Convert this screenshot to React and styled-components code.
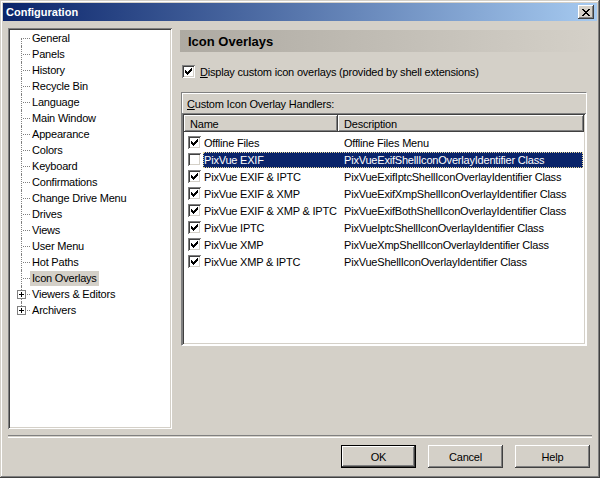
import styled, { createGlobalStyle } from 'styled-components';

const GlobalStyle = createGlobalStyle`
  html, body {
    margin: 0;
    padding: 0;
    background: #d4d0c8;
  }
  body {
    font-family: "Liberation Sans", Arial, sans-serif;
    font-size: 11px;
    letter-spacing: -0.2px;
    color: #000;
  }
`;

const Window = styled.div`
  box-sizing: border-box;
  width: 600px;
  height: 478px;
  padding: 3px;
  display: flex;
  flex-direction: column;
  background: #d4d0c8;
  box-shadow: inset -1px -1px #404040, inset 1px 1px #d4d0c8,
    inset -2px -2px #808080, inset 2px 2px #fff;
`;

const TitleBar = styled.div`
  height: 18px;
  flex-shrink: 0;
  display: flex;
  align-items: center;
  justify-content: space-between;
  padding: 0 3px 0 3px;
  background: linear-gradient(to right, #0a246a, #a6caf0);
`;

const TitleText = styled.span`
  color: #fff;
  font-weight: bold;
  font-size: 11px;
  letter-spacing: 0;
`;

const CloseButton = styled.div`
  width: 16px;
  height: 14px;
  display: flex;
  align-items: center;
  justify-content: center;
  background: #d4d0c8;
  box-shadow: inset -1px -1px #404040, inset 1px 1px #fff,
    inset -2px -2px #808080;
`;

const Body = styled.div`
  flex: 1;
  display: flex;
  flex-direction: column;
  padding: 7px 5px 7px 5px;
  min-height: 0;
`;

const MainRow = styled.div`
  display: flex;
  gap: 8px;
  height: 402px;
`;

const Tree = styled.div`
  box-sizing: border-box;
  width: 164px;
  background: #fff;
  padding: 2px;
  box-shadow: inset 1px 1px #808080, inset -1px -1px #fff,
    inset 2px 2px #404040, inset -2px -2px #d4d0c8;
`;

const TreeRow = styled.div`
  height: 16px;
  display: flex;
  align-items: center;
`;

const Gutter = styled.div`
  position: relative;
  width: 20px;
  height: 16px;
  flex-shrink: 0;

  &::before {
    content: '';
    position: absolute;
    left: 11px;
    top: ${p => (p.$first ? '8px' : '0')};
    height: ${p => (p.$last || p.$first ? '8px' : '16px')};
    border-left: 1px dotted #808080;
  }

  &::after {
    content: '';
    position: absolute;
    left: 13px;
    top: 8px;
    width: 7px;
    border-top: 1px dotted #808080;
  }
`;

const Expander = styled.svg`
  position: absolute;
  left: 7px;
  top: 4px;
  z-index: 1;
`;

const TreeLabel = styled.span`
  padding: 1px 2px;
  line-height: 13px;
  white-space: nowrap;
  background: ${p => (p.$selected ? '#d4d0c8' : 'transparent')};
`;

const RightPanel = styled.div`
  flex: 1;
  display: flex;
  flex-direction: column;
  padding-top: 2px;
`;

const PageHeader = styled.div`
  height: 22px;
  display: flex;
  align-items: center;
  padding-left: 8px;
  font-size: 13px;
  font-weight: bold;
  letter-spacing: 0;
  background: linear-gradient(to right, #aeaaa2, #d4d0c8);
`;

const CheckRow = styled.label`
  display: flex;
  align-items: center;
  gap: 5px;
  margin: 13px 0 0 2px;
  height: 13px;
`;

const Box = styled.span`
  box-sizing: border-box;
  width: 13px;
  height: 13px;
  flex-shrink: 0;
  background: #fff;
  display: flex;
  align-items: center;
  justify-content: center;
  box-shadow: inset 1px 1px #808080, inset -1px -1px #fff,
    inset 2px 2px #404040, inset -2px -2px #d4d0c8;
`;

const Frame = styled.div`
  box-sizing: border-box;
  width: 406px;
  height: 254px;
  margin: 14px 0 0 1px;
  display: flex;
  flex-direction: column;
  border: 1px solid;
  border-color: #808080 #fff #fff #808080;
`;

const FrameLabel = styled.div`
  height: 20px;
  display: flex;
  align-items: center;
  padding: 1px 0 0 4px;
  box-sizing: border-box;
  border-top: 1px solid #fff;
  border-left: 1px solid #fff;
`;

const ListView = styled.div`
  flex: 1;
  background: #fff;
  padding: 2px;
  box-shadow: inset 1px 1px #808080, inset -1px -1px #fff,
    inset 2px 2px #404040, inset -2px -2px #d4d0c8;
`;

const HeaderRow = styled.div`
  display: flex;
  height: 17px;
  background: #d4d0c8;
`;

const HeaderCell = styled.div`
  box-sizing: border-box;
  width: ${p => p.$w}px;
  height: 17px;
  display: flex;
  align-items: center;
  padding-left: 6px;
  box-shadow: inset -1px -1px #404040, inset 1px 1px #fff,
    inset -2px -2px #808080;
`;

const Rows = styled.div`
  padding-top: 3px;
`;

const ItemRow = styled.div`
  height: 17px;
  display: flex;
  align-items: flex-start;
  padding-left: 4px;
`;

const RowCheck = styled(Box)`
  margin-top: 1px;
`;

const ItemLabel = styled.div`
  box-sizing: border-box;
  flex: 1;
  height: 16px;
  margin: 0 1px 0 2px;
  display: flex;
  align-items: center;
  white-space: nowrap;
  background: ${p => (p.$selected ? '#0a246a' : 'transparent')};
  color: ${p => (p.$selected ? '#fff' : '#000')};
  border: 1px dotted ${p => (p.$selected ? '#e8d898' : 'transparent')};
`;

const NameCell = styled.span`
  width: 140px;
`;

const Separator = styled.div`
  margin-top: 6px;
  height: 1px;
  border-top: 1px solid #808080;
  border-bottom: 1px solid #fff;
`;

const ButtonRow = styled.div`
  display: flex;
  justify-content: flex-end;
  gap: 12px;
  margin-top: 7px;
  padding-right: 2px;
`;

const Button = styled.div`
  box-sizing: border-box;
  width: 75px;
  height: 23px;
  display: flex;
  align-items: center;
  justify-content: center;
  background: #d4d0c8;
  border: ${p => (p.$default ? '1px solid #000' : 'none')};
  box-shadow: ${p =>
    p.$default
      ? 'inset -1px -1px #404040, inset 1px 1px #fff, inset -2px -2px #808080'
      : 'inset -1px -1px #404040, inset 1px 1px #fff, inset -2px -2px #808080, inset 2px 2px #d4d0c8'};
`;

const Check = () => (
  <svg width="7" height="7" viewBox="0 0 7 7" shapeRendering="crispEdges">
    <path
      fill="#000"
      d="M6 0h1v3h-1zM5 1h1v3h-1zM4 2h1v3h-1zM0 2h1v3h-1zM1 3h1v3h-1zM2 4h1v3h-1zM3 3h1v3h-1z"
    />
  </svg>
);

const CheckBox = ({ checked, as }) => {
  const C = as || Box;
  return <C>{checked && <Check />}</C>;
};

const Plus = () => (
  <Expander width="9" height="9" viewBox="0 0 9 9" shapeRendering="crispEdges">
    <rect x="0.5" y="0.5" width="8" height="8" fill="#fff" stroke="#808080" />
    <path d="M2 4h5v1h-5zM4 2h1v5h-1z" fill="#000" />
  </Expander>
);

const treeItems = [
  'General', 'Panels', 'History', 'Recycle Bin', 'Language', 'Main Window',
  'Appearance', 'Colors', 'Keyboard', 'Confirmations', 'Change Drive Menu',
  'Drives', 'Views', 'User Menu', 'Hot Paths', 'Icon Overlays',
  'Viewers & Editors', 'Archivers',
];
const expandable = ['Viewers & Editors', 'Archivers'];

const handlers = [
  { name: 'Offline Files', desc: 'Offline Files Menu', on: true },
  { name: 'PixVue EXIF', desc: 'PixVueExifShellIconOverlayIdentifier Class', on: false, sel: true },
  { name: 'PixVue EXIF & IPTC', desc: 'PixVueExifIptcShellIconOverlayIdentifier Class', on: true },
  { name: 'PixVue EXIF & XMP', desc: 'PixVueExifXmpShellIconOverlayIdentifier Class', on: true },
  { name: 'PixVue EXIF & XMP & IPTC', desc: 'PixVueExifBothShellIconOverlayIdentifier Class', on: true },
  { name: 'PixVue IPTC', desc: 'PixVueIptcShellIconOverlayIdentifier Class', on: true },
  { name: 'PixVue XMP', desc: 'PixVueXmpShellIconOverlayIdentifier Class', on: true },
  { name: 'PixVue XMP & IPTC', desc: 'PixVueShellIconOverlayIdentifier Class', on: true },
];

export default function App() {
  return (
    <>
      <GlobalStyle />
      <Window>
        <TitleBar>
          <TitleText>Configuration</TitleText>
          <CloseButton>
            <svg width="8" height="7" viewBox="0 0 8 7" shapeRendering="crispEdges">
              <path
                fill="#000"
                d="M0 0h2v1h-2zM6 0h2v1h-2zM1 1h2v1h-2zM5 1h2v1h-2zM2 2h4v1h-4zM3 3h2v1h-2zM2 4h4v1h-4zM1 5h2v1h-2zM5 5h2v1h-2zM0 6h2v1h-2zM6 6h2v1h-2z"
              />
            </svg>
          </CloseButton>
        </TitleBar>

        <Body>
          <MainRow>
            <Tree>
              {treeItems.map((item, i) => (
                <TreeRow key={item}>
                  <Gutter $first={i === 0} $last={i === treeItems.length - 1}>
                    {expandable.includes(item) && <Plus />}
                  </Gutter>
                  <TreeLabel $selected={item === 'Icon Overlays'}>{item}</TreeLabel>
                </TreeRow>
              ))}
            </Tree>

            <RightPanel>
              <PageHeader>Icon Overlays</PageHeader>
              <CheckRow>
                <CheckBox checked />
                <span><u>D</u>isplay custom icon overlays (provided by shell extensions)</span>
              </CheckRow>

              <Frame>
                <FrameLabel><span><u>C</u>ustom Icon Overlay Handlers:</span></FrameLabel>
                <ListView>
                  <HeaderRow>
                    <HeaderCell $w={154}>Name</HeaderCell>
                    <HeaderCell $w={246}>Description</HeaderCell>
                  </HeaderRow>
                  <Rows>
                    {handlers.map(h => (
                      <ItemRow key={h.name}>
                        <CheckBox checked={h.on} as={RowCheck} />
                        <ItemLabel $selected={h.sel}>
                          <NameCell>{h.name}</NameCell>
                          <span>{h.desc}</span>
                        </ItemLabel>
                      </ItemRow>
                    ))}
                  </Rows>
                </ListView>
              </Frame>
            </RightPanel>
          </MainRow>

          <Separator />

          <ButtonRow>
            <Button $default>OK</Button>
            <Button>Cancel</Button>
            <Button>Help</Button>
          </ButtonRow>
        </Body>
      </Window>
    </>
  );
}
